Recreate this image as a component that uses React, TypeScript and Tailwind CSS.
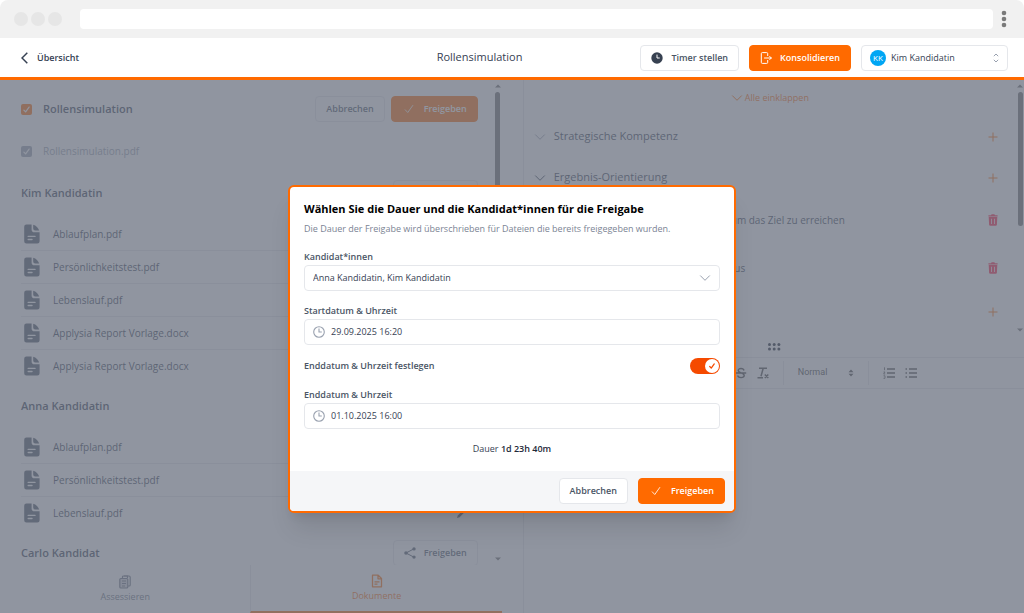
import { useState } from "react";
import type { ReactNode } from "react";

const candidates = [
    {
        name: "Kim Kandidatin",
        files: [
            "Ablaufplan.pdf",
            "Persönlichkeitstest.pdf",
            "Lebenslauf.pdf",
            "Applysia Report Vorlage.docx",
            "Applysia Report Vorlage.docx",
        ],
    },
    { name: "Anna Kandidatin", files: ["Ablaufplan.pdf", "Persönlichkeitstest.pdf", "Lebenslauf.pdf"] },
    { name: "Carlo Kandidat", files: [] },
];

function Check({ className }: { className: string }) {
    return (
        <svg viewBox="0 0 12 12" className={className} fill="none" stroke="currentColor" strokeLinecap="round" strokeLinejoin="round">
            <path d="M1.5 7 L4.5 10.2 L10.5 1.8" />
        </svg>
    );
}

function Chevron({ className }: { className: string }) {
    return (
        <svg viewBox="0 0 12 8" className={className} fill="none" stroke="currentColor" strokeLinecap="round" strokeLinejoin="round">
            <path d="M1.5 1.8 L6 6.3 L10.5 1.8" />
        </svg>
    );
}

function FileIcon() {
    return (
        <svg viewBox="0 0 16 20" className="h-5 w-4 text-gray-600">
            <path
                fill="currentColor"
                fillRule="evenodd"
                d="M2.4 .5 H7.6 V5.4 A2.8 2.8 0 0 0 10.4 8.2 H15.6 V17.2 A2.2 2.2 0 0 1 13.4 19.4 H2.4 A2.2 2.2 0 0 1 .2 17.2 V2.7 A2.2 2.2 0 0 1 2.4 .5 Z M4.2 11.7 A.7 .7 0 0 0 4.2 13.1 H11 A.7 .7 0 0 0 11 11.7 Z M4.2 14.8 A.7 .7 0 0 0 4.2 16.2 H8 A.7 .7 0 0 0 8 14.8 Z"
            />
            <path fill="currentColor" d="M9.2 .7 C12 1.5 14.4 3.8 15.2 6.6 H11.2 A2 2 0 0 1 9.2 4.6 Z" />
        </svg>
    );
}

function ShareIcon() {
    return (
        <svg viewBox="0 0 12 12" className="size-3" fill="currentColor">
            <path d="M2 6 L10 1.8 M2 6 L10 10.2" stroke="currentColor" strokeWidth="1" />
            <circle cx="2" cy="6" r="1.8" />
            <circle cx="10" cy="1.9" r="1.7" />
            <circle cx="10" cy="10.1" r="1.7" />
        </svg>
    );
}

function PencilIcon() {
    return (
        <svg viewBox="0 0 12 12" className="size-3" fill="currentColor">
            <path d="M1 11 L1.8 8.4 L9.4 .8 L11.2 2.6 L3.6 10.2 Z" />
        </svg>
    );
}

function ClockIcon() {
    return (
        <svg viewBox="0 0 12 12" className="size-3 text-gray-400" fill="none" stroke="currentColor" strokeWidth="1.1">
            <circle cx="6" cy="6" r="5.3" />
            <path d="M6 2.5 V6 H8.8" />
        </svg>
    );
}

function Plus() {
    return (
        <button aria-label="Hinzufügen" className="text-[#ff6a00]">
            <svg viewBox="0 0 10 10" className="size-2.5" fill="none" stroke="currentColor">
                <path d="M5 .5 V9.5 M.5 5 H9.5" />
            </svg>
        </button>
    );
}

function Trash() {
    return (
        <button aria-label="Löschen" className="text-[#ff1f45]">
            <svg viewBox="0 0 10 12" className="h-3 w-2.5" fill="currentColor">
                <path
                    fillRule="evenodd"
                    d="M3 1.2 L3.6 .2 H6.4 L7 1.2 H9.6 V2.6 H.4 V1.2 Z M.7 3 H9.3 L8.9 10.7 A1.2 1.2 0 0 1 7.7 11.8 H2.3 A1.2 1.2 0 0 1 1.1 10.7 Z M3.2 4.7 V10 H4 V4.7 Z M6 4.7 V10 H6.800 V4.7 Z"
                />
            </svg>
        </button>
    );
}

function Scrollbar({ thumb }: { thumb: string }) {
    return (
        <div className="flex w-2 shrink-0 flex-col items-center gap-1 py-1 text-[#6b6b6b]">
            <svg viewBox="0 0 6 4" className="h-1 w-1.5 shrink-0" fill="currentColor">
                <path d="M0 3.5 L3 .5 L6 3.5 Z" />
            </svg>
            <div className={`w-[5px] rounded-full bg-[#6b6b6b] ${thumb}`} />
            <svg viewBox="0 0 6 4" className="mt-auto h-1 w-1.5 shrink-0" fill="currentColor">
                <path d="M0 .5 L3 3.5 L6 .5 Z" />
            </svg>
        </div>
    );
}

function Btn({ children, primary }: { children: ReactNode; primary?: boolean }) {
    return (
        <button
            className={`flex h-[26px] items-center gap-2 rounded border px-2.5 text-[9px] ${
                primary ? "border-[#ff6a00] bg-[#ff6a00] font-semibold text-white" : "border-gray-200 bg-white font-semibold text-gray-600"
            }`}
        >
            {children}
        </button>
    );
}

function BrowserBar() {
    return (
        <div className="flex h-[38px] shrink-0 items-center rounded-t-lg bg-[#f1f1f1] pr-[17px] pl-3.5">
            <div className="flex gap-[3px]">
                <span className="size-3.5 rounded-full bg-[#e6e6e6]" />
                <span className="size-3.5 rounded-full bg-[#e6e6e6]" />
                <span className="size-3.5 rounded-full bg-[#e6e6e6]" />
            </div>
            <div className="mr-2 ml-[18px] h-5 flex-1 rounded-sm bg-white" />
            <svg viewBox="0 0 6 18" className="h-[18px] w-1.5" fill="#7a7a7a">
                <circle cx="3" cy="3" r="2.3" />
                <circle cx="3" cy="9" r="2.3" />
                <circle cx="3" cy="15" r="2.3" />
            </svg>
        </div>
    );
}

function Header() {
    return (
        <header className="flex h-[42px] shrink-0 items-center border-b-[3px] border-[#ff6a00] bg-white pr-4 pl-[21px]">
            <div className="flex-1">
                <a href="#" className="inline-flex items-center gap-[9px] text-[9px] font-semibold text-gray-700">
                    <svg viewBox="0 0 7 12" className="h-3 w-[7px]" fill="none" stroke="currentColor" strokeWidth="1.5">
                        <path d="M6.3 .8 L1 6 L6.3 11.2" />
                    </svg>
                    Übersicht
                </a>
            </div>
            <h1 className="mr-[118px] text-[11px] text-gray-700">Rollensimulation</h1>
            <div className="flex gap-2.5">
                <Btn>
                    <svg viewBox="0 0 12 12" className="size-3">
                        <circle cx="6" cy="6" r="5.7" fill="#374151" />
                        <path d="M6 2.6 V6 H8.7" fill="none" stroke="#fff" />
                    </svg>
                    Timer stellen
                </Btn>
                <Btn primary>
                    <svg viewBox="0 0 12 12" className="size-3" fill="none" stroke="currentColor" strokeLinecap="round" strokeLinejoin="round">
                        <path d="M7.7 3.6 V1.6 A1 1 0 0 0 6.7 .6 H2.3 A1 1 0 0 0 1.3 1.6 V10.4 A1 1 0 0 0 2.3 11.4 H6.7 A1 1 0 0 0 7.7 10.4 V8.4 M4.5 6 H11.3 M9.7 4.4 L11.3 6 L9.7 7.6" />
                    </svg>
                    Konsolidieren
                </Btn>
                <div className="flex h-[26px] w-[147px] items-center rounded border border-gray-200 px-2">
                    <span className="flex size-4 shrink-0 items-center justify-center rounded-full bg-[#00a6f4] text-[8px] text-white">KK</span>
                    <select aria-label="Kandidat" className="ml-[5px] min-w-0 flex-1 appearance-none bg-transparent text-[9px] text-gray-700 outline-none">
                        <option>Kim Kandidatin</option>
                    </select>
                    <svg viewBox="0 0 6 10" className="h-2.5 w-1.5 text-gray-400" fill="none" stroke="currentColor">
                        <path d="M.8 3.2 L3 1 L5.2 3.2 M.8 6.8 L3 9 L5.2 6.8" />
                    </svg>
                </div>
            </div>
        </header>
    );
}

function TickBox({ label, muted }: { label: string; muted?: boolean }) {
    const id = label.replace(".", "-");
    return (
        <div className="flex items-center">
            <span className="relative size-[11px]">
                <input id={id} type="checkbox" defaultChecked disabled={muted} className={`block size-[11px] appearance-none rounded-xs ${muted ? "bg-gray-400" : "bg-[#ff6a00]"}`} />
                <Check className="pointer-events-none absolute inset-0.5 size-[7px] stroke-2 text-white" />
            </span>
            <label htmlFor={id} className={muted ? "pl-[11px] text-[10px] text-gray-400" : "pl-[11px] text-[11px] font-semibold text-gray-700"}>
                {label}
            </label>
        </div>
    );
}

function Documents() {
    return (
        <section className="flex w-[49%] shrink-0 flex-col">
            <div className="flex min-h-0 flex-1">
                <div className="min-w-0 flex-1 overflow-hidden pt-4 pr-4 pl-[21px]">
                    <div className="flex h-[26px] items-center justify-between">
                        <TickBox label="Rollensimulation" />
                        <div className="flex gap-1.5">
                            <Btn>Abbrechen</Btn>
                            <Btn primary>
                                <Check className="mx-0.5 size-2.5" />
                                Freigeben
                            </Btn>
                        </div>
                    </div>
                    <div className="flex h-[58px] items-center">
                        <TickBox label="Rollensimulation.pdf" muted />
                    </div>
                    {candidates.map((c) => (
                        <div key={c.name} className="mb-[11px]">
                            <div className="flex h-[26px] items-center justify-between">
                                <h2 className="text-[11px] font-semibold text-gray-700">{c.name}</h2>
                                <Btn>
                                    <ShareIcon />
                                    Freigeben
                                </Btn>
                            </div>
                            <ul className="mt-3 divide-y divide-gray-200">
                                {c.files.map((file, i) => (
                                    <li key={i} className="flex items-center">
                                        <div className="flex h-8 flex-1 items-center gap-[13px] pl-[3px] text-[10px] text-gray-700">
                                            <FileIcon />
                                            {file}
                                        </div>
                                        <button aria-label="Bearbeiten" className="mr-2.5 text-gray-600">
                                            <PencilIcon />
                                        </button>
                                    </li>
                                ))}
                            </ul>
                        </div>
                    ))}
                </div>
                <Scrollbar thumb="h-[96%] max-h-[420px]" />
            </div>
            <nav className="flex h-12 shrink-0 text-[9px]">
                <a href="#" className="flex flex-1 flex-col items-center justify-center gap-px text-gray-500">
                    <svg viewBox="0 0 12 14" className="h-3.5 w-3" fill="none" stroke="currentColor" strokeWidth="1.2">
                        <path d="M3.5 3 V2 A1 1 0 0 1 4.5 1 H10 A1.2 1.2 0 0 1 11.2 2.2 V10 A1 1 0 0 1 10.2 11 H9" />
                        <rect x=".8" y="3.5" width="8" height="9.5" rx="1" fill="currentColor" fillOpacity=".3" />
                        <path d="M5 1 H8.5 V3 M3 6 H7 M3 8.5 H7 M3 11 H6" />
                    </svg>
                    Assessieren
                </a>
                <a href="#" className="flex flex-1 flex-col items-center justify-center gap-px border-b-2 border-l border-b-[#ff6a00] border-l-gray-200 text-[#ff6a00]">
                    <svg viewBox="0 0 12 14" className="h-3.5 w-3" fill="none" stroke="currentColor" strokeWidth="1.3" strokeLinejoin="round">
                        <path d="M1.5 1.2 H7.2 L10.5 4.5 V12.8 H1.5 Z M7 1.2 V4.8 H10.5 M3.5 7.8 H8.5 M3.5 10.2 H6.5" />
                    </svg>
                    Dokumente
                </a>
            </nav>
        </section>
    );
}

function Competence({ name, open }: { name: string; open?: boolean }) {
    return (
        <div className="flex h-[41px] items-center">
            <Chevron className={`h-2 w-3 ${open ? "text-gray-700" : "text-gray-400"}`} />
            <h3 className="flex-1 pl-2 text-[11px] text-gray-700">{name}</h3>
            <Plus />
        </div>
    );
}

function Competences() {
    return (
        <section className="ml-[21px] flex min-w-0 flex-1 flex-col border-l border-gray-200">
            <div className="flex h-[256px] shrink-0">
                <div className="min-w-0 flex-1 pr-[18px] pl-2.5">
                    <div className="flex h-9 items-center justify-center pl-2">
                        <button className="flex items-center gap-0.5 text-[9px] text-[#ff6a00]">
                            <Chevron className="h-2 w-3" />
                            Alle einklappen
                        </button>
                    </div>
                    <Competence name="Strategische Kompetenz" />
                    <Competence name="Ergebnis-Orientierung" open />
                    <div className="flex h-11 items-center justify-between pl-[197px] text-[10px] text-gray-700">
                        um das Ziel zu erreichen
                        <Trash />
                    </div>
                    <div className="flex h-[52px] items-center justify-between pl-[195px] text-[10px] text-gray-700">
                        aus
                        <Trash />
                    </div>
                    <div className="flex h-9 items-center justify-end">
                        <Plus />
                    </div>
                </div>
                <Scrollbar thumb="h-[134px]" />
            </div>
            <div className="flex h-[21px] shrink-0 items-center justify-center">
                <svg viewBox="0 0 14 10" className="h-2.5 w-3.5 text-gray-900" fill="currentColor">
                    <circle cx="2.5" cy="2.5" r="1.5" />
                    <circle cx="7.2" cy="2.5" r="1.5" />
                    <circle cx="11.9" cy="2.5" r="1.5" />
                    <circle cx="2.5" cy="7" r="1.5" />
                    <circle cx="7.2" cy="7" r="1.5" />
                    <circle cx="11.9" cy="7" r="1.5" />
                </svg>
            </div>
            <div className="flex h-8 shrink-0 items-center border-y border-gray-200 pl-[211px] text-[#444]">
                <button aria-label="Durchgestrichen">
                    <svg viewBox="0 0 12 12" className="size-3" fill="none" stroke="currentColor" strokeWidth="1.4">
                        <path d="M9 3.5 C8.5 .8 3.2 .8 3.2 3.5 C3.2 6.3 9.2 5.5 9.2 8.5 C9.2 11.3 3 11.3 2.8 8.5 M.8 6 H11.2" />
                    </svg>
                </button>
                <button aria-label="Formatierung entfernen" className="ml-2.5">
                    <svg viewBox="0 0 12 12" className="size-3" fill="none" stroke="currentColor" strokeWidth="1.5">
                        <path d="M2 1.2 H10 M6.2 1.2 L4 9.2 M.5 10.8 H6 M7.8 7.5 L11.3 11 M11.3 7.5 L7.8 11" />
                    </svg>
                </button>
                <div className="ml-3.5 flex h-6 items-center border-x border-gray-200 px-3.5 font-['Roboto',sans-serif]">
                    <select aria-label="Textformat" className="w-[50px] appearance-none bg-transparent text-[9px] outline-none">
                        <option>Normal</option>
                    </select>
                    <svg viewBox="0 0 6 8" className="h-2 w-1.5" fill="currentColor">
                        <path d="M.5 3.2 L3 .5 L5.5 3.2 Z M.5 4.8 L3 7.5 L5.5 4.8 Z" />
                    </svg>
                </div>
                <button aria-label="Nummerierte Liste" className="ml-3.5">
                    <svg viewBox="0 0 12 12" className="size-3" fill="none" stroke="currentColor" strokeWidth="1.4">
                        <path d="M4 2 H12 M4 6 H12 M4 10 H12" />
                        <path d="M1.5 .3 V3.2 M.5 5 H2 L.6 7 H2.2 M.5 8.8 H2 V11.3 H.5" strokeWidth=".8" />
                    </svg>
                </button>
                <button aria-label="Aufzählung" className="ml-2.5">
                    <svg viewBox="0 0 12 12" className="size-3" fill="none" stroke="currentColor" strokeWidth="1.4">
                        <path d="M4 2 H12 M4 6 H12 M4 10 H12 M.5 2 H2 M.5 6 H2 M.5 10 H2" />
                    </svg>
                </button>
            </div>
        </section>
    );
}

function DateField({ id, label, value }: { id: string; label: string; value: string }) {
    return (
        <div>
            <label htmlFor={id} className="block text-[9px] leading-4 font-semibold text-gray-600">
                {label}
            </label>
            <div className="flex h-[26px] items-center gap-1.5 rounded border border-gray-200 px-2">
                <ClockIcon />
                <input id={id} defaultValue={value} className="min-w-0 flex-1 text-[9px] text-gray-700 outline-none" />
            </div>
        </div>
    );
}

function ShareDialog() {
    const [hasEnd, setHasEnd] = useState(true);

    return (
        <div role="dialog" aria-labelledby="dialog-title" className="w-full max-w-md overflow-hidden rounded-md border-2 border-[#ff6a00] bg-white shadow-xl">
            <div className="flex flex-col gap-3 p-3.5">
                <div>
                    <h2 id="dialog-title" className="text-[11px] leading-4 font-bold text-black">
                        Wählen Sie die Dauer und die Kandidat*innen für die Freigabe
                    </h2>
                    <p className="mt-1 text-[9px] leading-4 text-[#7b8494]">Die Dauer der Freigabe wird überschrieben für Dateien die bereits freigegeben wurden.</p>
                </div>
                <div>
                    <label htmlFor="people" className="block text-[9px] leading-4 font-semibold text-gray-600">
                        Kandidat*innen
                    </label>
                    <div className="flex h-[26px] items-center rounded border border-gray-200 px-2">
                        <select id="people" className="min-w-0 flex-1 appearance-none bg-transparent text-[9px] text-gray-700 outline-none">
                            <option>Anna Kandidatin, Kim Kandidatin</option>
                        </select>
                        <Chevron className="h-2 w-3 text-gray-400" />
                    </div>
                </div>
                <DateField id="start" label="Startdatum & Uhrzeit" value="29.09.2025 16:20" />
                <div className="flex h-[18px] items-center justify-between">
                    <label htmlFor="has-end" className="text-[9px] font-semibold text-gray-600">
                        Enddatum & Uhrzeit festlegen
                    </label>
                    <span className="relative h-4 w-[30px]">
                        <input
                            id="has-end"
                            type="checkbox"
                            role="switch"
                            checked={hasEnd}
                            onChange={(e) => setHasEnd(e.target.checked)}
                            className="block h-4 w-[30px] appearance-none rounded-full bg-gray-300 checked:bg-[#f54a00]"
                        />
                        <span className={`pointer-events-none absolute top-px flex size-3.5 items-center justify-center rounded-full bg-white text-[#f54a00] ${hasEnd ? "right-px" : "left-px"}`}>
                            {hasEnd && <Check className="size-1.5 stroke-[2.5]" />}
                        </span>
                    </span>
                </div>
                <DateField id="end" label="Enddatum & Uhrzeit" value="01.10.2025 16:00" />
                <p className="text-center text-[9px] leading-4 text-gray-700">
                    Dauer <b className="font-semibold text-gray-800">1d 23h 40m</b>
                </p>
            </div>
            <div className="flex h-10 items-center justify-end gap-2.5 bg-[#f5f6f8] px-[9px]">
                <Btn>Abbrechen</Btn>
                <Btn primary>
                    <Check className="mx-0.5 size-2.5" />
                    Freigeben
                </Btn>
            </div>
        </div>
    );
}

export default function App() {
    return (
        <div className="flex h-screen flex-col overflow-hidden bg-white font-['Open_Sans','Noto_Sans',sans-serif]">
            <BrowserBar />
            <Header />
            <main className="relative flex min-h-0 flex-1">
                <Documents />
                <Competences />
                <div className="absolute inset-0 flex items-center justify-center bg-[#6b7280]/75 pt-1">
                    <ShareDialog />
                </div>
            </main>
        </div>
    );
}
